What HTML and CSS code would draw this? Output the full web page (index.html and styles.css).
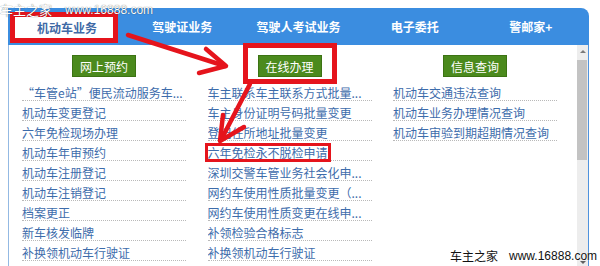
FILE: index.html
```html
<!DOCTYPE html>
<html lang="zh-CN">
<head>
<meta charset="utf-8">
<title>机动车业务</title>
<link rel="stylesheet" href="styles.css">
</head>
<body>
<div class="page">
  <div class="panel">
    <nav class="tabs">
      <div class="tab active"><span class="tab-label">机动车业务</span></div>
      <div class="tab">驾驶证业务</div>
      <div class="tab">驾驶人考试业务</div>
      <div class="tab">电子委托</div>
      <div class="tab">警邮家+</div>
    </nav>
    <div class="body">
      <div class="cols">
        <section class="col">
          <div class="btn">网上预约</div>
          <ul class="list">
            <li>“车管e站”便民流动服务车...</li>
            <li>机动车变更登记</li>
            <li>六年免检现场办理</li>
            <li>机动车年审预约</li>
            <li>机动车注册登记</li>
            <li>机动车注销登记</li>
            <li>档案更正</li>
            <li>新车核发临牌</li>
            <li>补换领机动车行驶证</li>
          </ul>
        </section>
        <section class="col">
          <div class="btn">在线办理</div>
          <ul class="list">
            <li>车主联系车主联系方式批量...</li>
            <li>车主身份证明号码批量变更</li>
            <li>登记住所地址批量变更</li>
            <li>六年免检永不脱检申请</li>
            <li>深圳交警车管业务社会化申...</li>
            <li>网约车使用性质批量变更（...</li>
            <li>网约车使用性质变更在线申...</li>
            <li>补领检验合格标志</li>
            <li>补换领机动车行驶证</li>
          </ul>
        </section>
        <section class="col">
          <div class="btn">信息查询</div>
          <ul class="list">
            <li>机动车交通违法查询</li>
            <li>机动车业务办理情况查询</li>
            <li>机动车审验到期超期情况查询</li>
          </ul>
        </section>
      </div>
      <div class="scrollbar">
        <div class="sb-btn"><span class="tri-up"></span></div>
        <div class="sb-thumb"></div>
        <div class="sb-space"></div>
        <div class="sb-btn"><span class="tri-down"></span></div>
      </div>
    </div>
  </div>

  <div class="wm wm-top"><span>车主之家</span><span class="wm-url">www.16888.com</span></div>

  <div class="mark mark-online"></div>
  <div class="mark mark-row"></div>

  <svg class="arrows" width="600" height="266" viewBox="0 0 600 266">
    <g fill="none" stroke="#e5141c" stroke-width="4.5" stroke-linecap="round" stroke-linejoin="round">
      <path d="M128 35 L225 66"/>
      <path d="M206 49 L226 66 L199 73"/>
      <path d="M250 84 L221 140"/>
      <path d="M223 115 L220 141 L244 127"/>
    </g>
  </svg>

  <div class="wm wm-bottom"><span>车主之家</span><span class="wm-url">www.16888.com</span></div>
</div>
</body>
</html>
```
FILE: styles.css
```css
html, body {
  margin: 0;
  padding: 0;
  background: #ffffff;
}

body {
  font-family: "Noto Sans CJK SC", "Noto Sans", sans-serif;
}

.page {
  position: relative;
  width: 600px;
  height: 266px;
  overflow: hidden;
}

.panel {
  margin: 8px 0 0 8px;
  width: 581px;
}

/* tab bar */
.tabs {
  display: flex;
  height: 37px;
  background: #3b8de0;
  border-top-right-radius: 8px;
}

.tab {
  flex: 1;
  display: flex;
  align-items: center;
  justify-content: center;
  color: #ffffff;
  font-size: 12px;
  font-weight: bold;
  white-space: nowrap;
}

.tab.active {
  align-items: flex-start;
  justify-content: flex-start;
}

.tab-label {
  box-sizing: border-box;
  margin: 4px 0 0 2px;
  width: 108px;
  height: 31px;
  padding-left: 6px;
  border: 5px solid #e5141c;
  background: #ffffff;
  color: #3f6aa6;
  display: flex;
  align-items: center;
  justify-content: center;
}

/* body */
.body {
  display: flex;
  height: 223px;
  border-left: 1px solid #93b9e3;
  border-right: 1px solid #4f93de;
}

.cols {
  flex: 1;
  display: grid;
  grid-template-columns: repeat(3, 164px);
  column-gap: 21.5px;
  align-content: start;
  padding: 10px 0 0 13px;
}

.col {
  display: flex;
  flex-direction: column;
}

.btn {
  box-sizing: border-box;
  align-self: center;
  width: 64px;
  height: 22px;
  background: #4b8a1d;
  border: 1px solid #3c7313;
  color: #ffffff;
  font-size: 12px;
  display: flex;
  align-items: center;
  justify-content: center;
}

.list {
  list-style: none;
  margin: 4px 0 0;
  padding: 0;
}

.list li {
  padding-top: 4px;
  line-height: 15px;
  font-size: 12px;
  color: #3d6cab;
  border-bottom: 1px dotted #b9b9b9;
  white-space: nowrap;
  overflow: hidden;
}

/* scrollbar */
.scrollbar {
  width: 11px;
  background: #ededed;
  display: flex;
  flex-direction: column;
}

.sb-btn {
  height: 12px;
  display: flex;
  align-items: center;
  justify-content: center;
}

.tri-up {
  width: 0;
  height: 0;
  border-left: 3px solid transparent;
  border-right: 3px solid transparent;
  border-bottom: 3px solid #7a7a7a;
}

.tri-down {
  width: 0;
  height: 0;
  border-left: 3px solid transparent;
  border-right: 3px solid transparent;
  border-top: 3px solid #606060;
}

.sb-thumb {
  margin: 3px 1px 0 0;
  height: 100px;
  background: #c3c3c3;
}

.sb-space {
  flex: 1;
}

/* annotations */
.mark {
  position: absolute;
  box-sizing: border-box;
  border-style: solid;
  border-color: #e5141c;
}

.mark-online {
  left: 243px;
  top: 43px;
  width: 94px;
  height: 41px;
  border-width: 5px;
}

.mark-row {
  left: 205px;
  top: 143px;
  width: 126px;
  height: 19px;
  border-width: 3px;
}

.arrows {
  position: absolute;
  left: 0;
  top: 0;
}

/* watermarks */
.wm {
  position: absolute;
  display: flex;
  white-space: nowrap;
  line-height: 14px;
}

.wm-url {
  font-family: "Liberation Sans", Arial, sans-serif;
  font-size: 12px;
}

.wm-top {
  left: 0;
  top: 3px;
  gap: 13px;
  font-size: 13px;
  color: #ffffff;
  text-shadow: 0 0 1px rgba(0, 0, 0, 0.7);
}

.wm-bottom {
  left: 450px;
  top: 249px;
  gap: 11px;
  font-size: 12px;
  color: #111111;
  text-shadow: 0 0 1px #ffffff, 0 0 1px #ffffff;
}
```
